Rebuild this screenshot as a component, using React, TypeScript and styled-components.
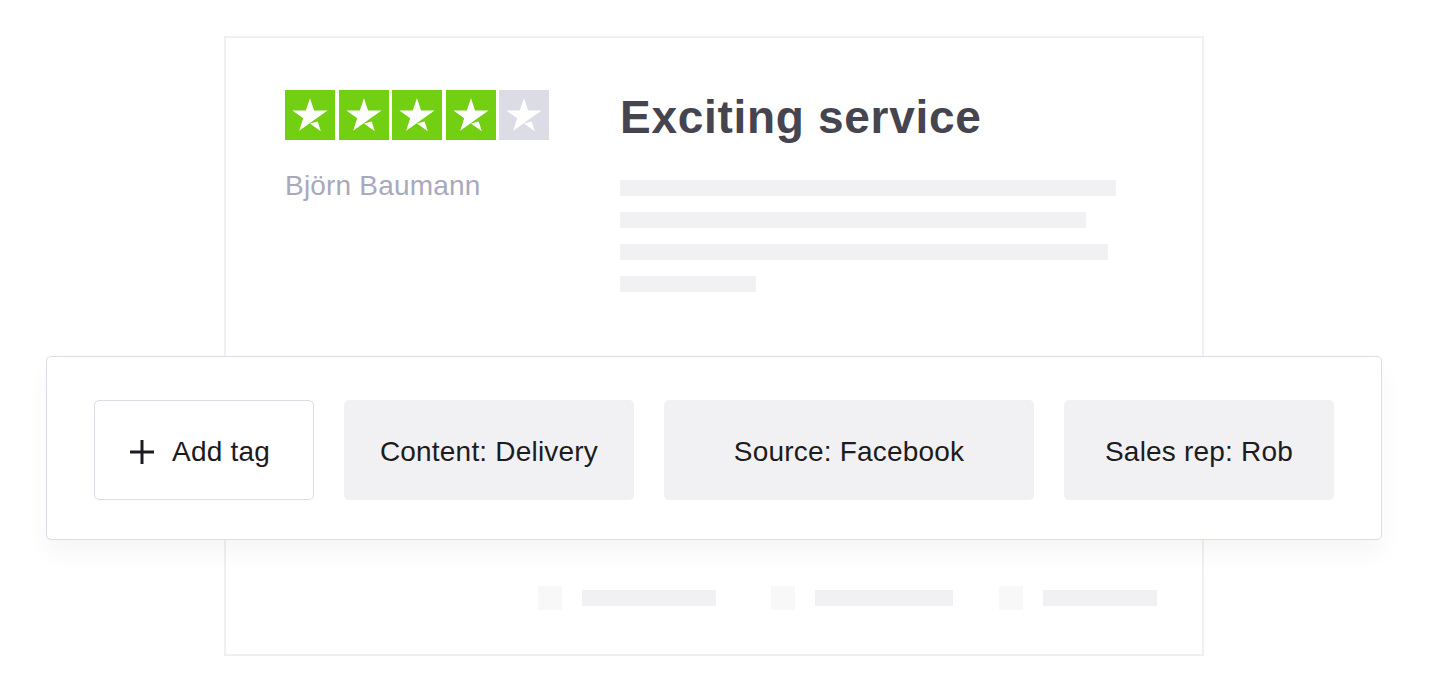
import * as React from "react";
import styled, { createGlobalStyle } from "styled-components";

const GlobalStyle = createGlobalStyle`
  html, body {
    margin: 0;
    padding: 0;
    background: #fff;
    font-family: "Liberation Sans", Arial, Helvetica, sans-serif;
  }
`;

const STAR_PATH =
  "M12 16.6l4.2-1.1 1.7 5.4-5.9-4.3zm9.6-7H14.2L12 2.8 9.7 9.6H2.4l5.9 4.2-2.2 6.8 5.9-4.2 3.6-2.6 6-4.3z";

const lines = [496, 466, 488, 136];
// width of each placeholder bar and the space before its group
const footer = [
  { w: 134, space: 0 },
  { w: 138, space: 55 },
  { w: 114, space: 46 },
];
const tags = [
  { label: "Content: Delivery", width: 290 },
  { label: "Source: Facebook", width: 370 },
  { label: "Sales rep: Rob", width: 270 },
];

export default function App() {
  return (
    <Stage>
      <GlobalStyle />
      <Card>
        <Top>
          <Left>
            <Stars>
              {[0, 1, 2, 3, 4].map((i) => (
                <StarBox key={i} $on={i < 4}>
                  <svg width="44" height="44" viewBox="0 0 24 24">
                    <path d={STAR_PATH} fill="#fff" />
                  </svg>
                </StarBox>
              ))}
            </Stars>
            <Author>Björn Baumann</Author>
          </Left>
          <Right>
            <Title>Exciting service</Title>
            <Lines>
              {lines.map((w, i) => (
                <Line key={i} $w={w} />
              ))}
            </Lines>
          </Right>
        </Top>
        <Footer>
          {footer.map((f, i) => (
            <FooterItem key={i} $space={f.space}>
              <Dot />
              <Line $w={f.w} />
            </FooterItem>
          ))}
        </Footer>
      </Card>

      <TagPanel>
        <AddTag>
          <svg width="24" height="24" viewBox="0 0 24 24">
            <path d="M12 0v24M0 12h24" stroke="#1c1b20" strokeWidth="3" />
          </svg>
          Add tag
        </AddTag>
        {tags.map((t) => (
          <Tag key={t.label} $w={t.width}>
            {t.label}
          </Tag>
        ))}
      </TagPanel>
    </Stage>
  );
}

const Stage = styled.div`
  position: relative;
  width: 1430px;
  height: 692px;
  overflow: hidden;
  padding: 36px 0 0 224px;
  box-sizing: border-box;
`;

const Card = styled.div`
  width: 980px;
  height: 620px;
  box-sizing: border-box;
  border: 2px solid #f0f0f2;
  padding: 52px 45px 44px 59px;
  display: flex;
  flex-direction: column;
  justify-content: space-between;
`;

const Top = styled.div`
  display: flex;
`;

const Left = styled.div`
  width: 335px;
  display: flex;
  flex-direction: column;
`;

const Stars = styled.div`
  display: flex;
  gap: 3.5px;
`;

const StarBox = styled.div<{ $on: boolean }>`
  width: 50px;
  height: 50px;
  display: flex;
  align-items: center;
  justify-content: center;
  background: ${(p) => (p.$on ? "#73cf11" : "#dcdce6")};
`;

const Author = styled.div`
  margin-top: 30px;
  font-size: 28px;
  line-height: 32px;
  letter-spacing: 0.2px;
  color: #a9a8bd;
`;

const Right = styled.div`
  display: flex;
  flex-direction: column;
  padding-top: 4px;
`;

const Title = styled.h1`
  margin: 0;
  font-size: 46px;
  line-height: 46px;
  font-weight: 700;
  letter-spacing: 0.7px;
  color: #45444f;
`;

const Lines = styled.div`
  margin-top: 40px;
  display: flex;
  flex-direction: column;
  gap: 16px;
`;

const Line = styled.div<{ $w: number }>`
  width: ${(p) => p.$w}px;
  height: 16px;
  background: #f1f1f3;
`;

const Footer = styled.div`
  display: flex;
  justify-content: flex-end;
`;

const FooterItem = styled.div<{ $space: number }>`
  display: flex;
  align-items: center;
  gap: 20px;
  margin-left: ${(p) => p.$space}px;
`;

const Dot = styled.div`
  width: 24px;
  height: 24px;
  background: #f8f8f8;
`;

const TagPanel = styled.div`
  position: absolute;
  top: 356px;
  left: 46px;
  width: 1336px;
  height: 184px;
  box-sizing: border-box;
  padding: 43px 47px 0;
  display: flex;
  align-items: flex-start;
  gap: 30px;
  background: #fff;
  border: 1.5px solid #dcdbe6;
  border-radius: 5px;
  box-shadow: 0 14px 24px rgba(0, 0, 0, 0.04);
`;

const TagBase = styled.div`
  height: 100px;
  box-sizing: border-box;
  border-radius: 5px;
  display: flex;
  align-items: center;
  justify-content: center;
  padding-top: 3px;
  font-size: 28px;
  letter-spacing: 0.2px;
  color: #1c1b20;
`;

const AddTag = styled(TagBase)`
  width: 220px;
  gap: 18px;
  padding-right: 8px;
  border: 1.5px solid #dcdbe6;
  background: #fff;
`;

const Tag = styled(TagBase)<{ $w: number }>`
  width: ${(p) => p.$w}px;
  background: #f1f1f4;
`;
